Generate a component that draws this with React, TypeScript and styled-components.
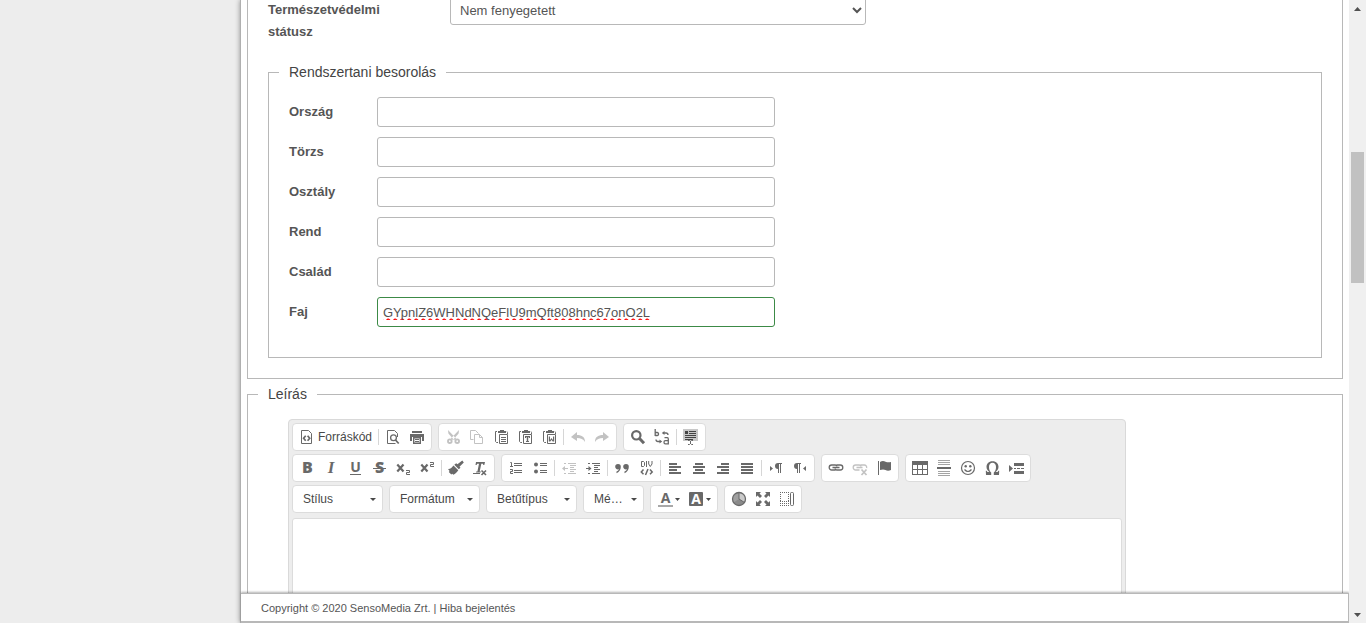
import React from "react";
import styled, { createGlobalStyle, css } from "styled-components";

const INK = "#696969";

const GlobalStyle = createGlobalStyle`
  *, *::before, *::after { box-sizing: border-box; }
  body {
    margin: 0;
    background: #ededed;
    color: #555;
    font-family: "Liberation Sans", Arial, sans-serif;
    font-size: 13px;
  }
  button, input, select, textarea { font-family: inherit; margin: 0; }
`;

const Page = styled.div`
  display: flex;
  height: 100vh;
  overflow: hidden;
`;

const Sidebar = styled.aside`
  flex: 0 0 240px;
`;

const Main = styled.main`
  flex: 1;
  min-width: 0;
  display: flex;
  flex-direction: column;
  background: #fff;
  border-left: 1px solid #b0b0b0;
  box-shadow: 0 0 5px rgba(0, 0, 0, 0.4);
`;

const Scroller = styled.div`
  flex: 1;
  min-height: 0;
  overflow: hidden;
  padding: 0 6px;
`;

const Scrolled = styled.div`
  margin-top: -40px;
`;

const Fieldset = styled.fieldset<{ $end?: number }>`
  margin: 0;
  min-width: 0;
  border: 1px solid #b8b8b8;
  padding: 15px 20px ${(p) => p.$end ?? 20}px;
`;

const Legend = styled.legend`
  margin-left: -10px;
  padding: 0 10px;
  font-size: 14px;
  line-height: 20px;
  color: #444;
`;

const Section = styled.div`
  margin-bottom: 5px;
`;

const StatusRow = styled.div`
  display: grid;
  grid-template-columns: 162px minmax(0, 416px);
  column-gap: 20px;
  align-items: start;
  margin-bottom: 19px;
`;

const Label = styled.label`
  font-weight: bold;
  line-height: 22px;
  padding: 4px 10px 0 0;
`;

const fieldLook = css`
  width: 100%;
  height: 30px;
  border: 1px solid #b8b8b8;
  border-radius: 3px;
  background: #fff;
  color: #555;
`;

const StatusSelect = styled.select`
  ${fieldLook}
  padding: 0 5px;
  font-size: 13px;
`;

const Fields = styled.div`
  display: grid;
  row-gap: 10px;
`;

const FieldRow = styled.div`
  display: grid;
  grid-template-columns: 88px minmax(0, 398px);
  align-items: start;
`;

const TextInput = styled.input<{ $valid?: boolean }>`
  ${fieldLook}
  padding: 0 5px;
  font-size: 13px;
  outline: none;
  ${(p) =>
    p.$valid &&
    css`
      border-color: #3c8a46;
      text-decoration: underline wavy #f00;
      text-decoration-skip-ink: none;
      text-underline-offset: 1px;
    `}
`;

const Editor = styled.div`
  max-width: 838px;
  margin: 0 20px;
  padding: 3px;
  border: 1px solid #d9d9d9;
  border-radius: 4px;
  background: #ededed;
`;

const Toolbar = styled.div`
  display: flex;
  flex-direction: column;
  gap: 3px;
  margin-bottom: 5px;
`;

const ToolRow = styled.div`
  display: flex;
  gap: 6px;
`;

const Group = styled.div`
  display: flex;
  align-items: center;
  height: 28px;
  padding: 0 2px;
  border: 1px solid #dcdcdc;
  border-radius: 4px;
  background: #fff;
`;

const Tool = styled.button<{ $off?: boolean; $gap?: number }>`
  display: flex;
  align-items: center;
  gap: ${(p) => p.$gap ?? 0}px;
  height: 24px;
  padding: 0 4px;
  border: 0;
  background: none;
  color: #484848;
  font-size: 12px;
  opacity: ${(p) => (p.$off ? 0.4 : 1)};
`;

const Separator = styled.span`
  width: 1px;
  height: 16px;
  margin: 0 2px;
  background: #d6d6d6;
`;

const Glyph = styled.svg`
  display: block;
  flex: none;
  overflow: visible;
  fill: ${INK};
`;

const Combo = styled.div<{ $narrow?: boolean }>`
  display: grid;
  align-items: center;
  width: ${(p) => (p.$narrow ? 61 : 91)}px;
  height: 28px;
  border: 1px solid #dcdcdc;
  border-radius: 4px;
  background: #fff;
  > * { grid-area: 1 / 1; }
  > svg { justify-self: end; margin-right: 6px; pointer-events: none; }
`;

const ComboSelect = styled.select`
  appearance: none;
  width: 100%;
  height: 100%;
  padding: 0 14px 0 10px;
  border: 0;
  background: none;
  color: #484848;
  font-size: 12px;
`;

const EditArea = styled.textarea`
  display: block;
  width: 100%;
  height: 300px;
  border: 1px solid #dcdcdc;
  border-radius: 3px;
  background: #fff;
  resize: none;
`;

const Footer = styled.footer`
  position: relative;
  flex: none;
  height: 30px;
  padding: 0 20px;
  border: solid #b8b8b8;
  border-width: 1px 1px 2px 0;
  box-shadow: 0 -1px 2px rgba(0, 0, 0, 0.3);
  background: #fff;
  font-size: 11px;
  line-height: 28px;
`;

const FooterLink = styled.a`
  color: inherit;
  text-decoration: none;
`;

const Track = styled.div`
  position: relative;
  flex: 0 0 17px;
  display: flex;
  flex-direction: column;
  background: #f0f0f0;
`;

const TrackArrow = styled.button`
  display: grid;
  place-items: center;
  height: 17px;
  padding: 0;
  border: 0;
  background: none;
`;

const TrackSpace = styled.div<{ $share: number }>`
  flex: ${(p) => p.$share} 1 0;
`;

const Thumb = styled.div`
  flex: 131 1 0;
  margin: 0 2px;
  background: #c1c1c1;
`;

const line = { fill: "none", stroke: INK, strokeWidth: 1 };
const serif = "Liberation Serif, serif";
const sans = "Open Sans, Liberation Sans, sans-serif";

const alignBars = (short: number) => (
  <path d={`M${short} 3h8v2h-8z M2 6h12v2H2z M${short} 9h8v2h-8z M2 12h12v2H2z`} />
);

const clipboard = (
  <>
    <path d="M5 2h2V1h4v1h2v2H5z" />
    <path {...line} d="M4 2.5H2.5v10l1 1H5M14.500 5V3.500L14 2.500" />
    <path {...line} d="M6.500 5.500h8v9h-8z" />
  </>
);

const curvedArrow = <path d="M1 8l6-5v3c5 0 8 2 8 7-2-3-4-4-8-4v3z" />;

const chain = (
  <g {...line} strokeWidth={1.3}>
    <path d="M7.500 10H3.700a2.400 2.400 0 0 1 0-5h3.500q1.600 0 1.800 1.300" />
    <path d="M8.500 5h3.800a2.400 2.400 0 0 1 0 5H8.800Q7.200 10 7 8.700M4.500 7.500h7" />
  </g>
);

const brokenChain = (
  <>
    <path {...line} strokeWidth={1.3} d="M7.500 10H3.700a2.400 2.400 0 0 1 0-5h3.500q1.600 0 1.800 1.300M8.500 5h3.800a2.400 2.400 0 0 1 2.300 3M4.500 7.500h6" />
    <path {...line} strokeWidth={1.7} d="M9.500 9.500l5 5.500M14.500 9.500l-5 5.500" />
  </>
);

const icons: Record<string, React.ReactNode> = {
  source: (
    <g {...line}>
      <path d="M2.500 1.500h7l3 3v10h-10z" />
      <path d="M6.700 6.700L4.600 9.200l2.100 2.500M8.600 6.700l2.100 2.500-2.100 2.500" strokeWidth={1.7} />
    </g>
  ),
  preview: (
    <g {...line}>
      <path d="M12.500 8V4.500l-3-3h-7v13h8" />
      <circle cx="8.500" cy="8.800" r="2.900" strokeWidth={1.3} />
      <path d="M10.500 11l3.200 3.500" strokeWidth={1.8} />
    </g>
  ),
  print: (
    <>
      <path d="M3 2h10v2H3z M1 5h14v7h-2V8H3v4H1z" />
      <path {...line} strokeWidth={1.4} d="M4.700 8.700h6.600v5.600H4.700z" />
      <path d="M6 10h4v1H6z M6 12h4v1H6z" />
    </>
  ),
  cut: (
    <>
      <path d="M3 1l.4 3.500 5.700 6.500 2-1.500zM14 1l-.4 3.500L7.900 11l-2-1.500z" />
      <g {...line} strokeWidth={1.9}>
        <circle cx="4.800" cy="12.200" r="1.800" />
        <circle cx="12.200" cy="12.200" r="1.800" />
      </g>
    </>
  ),
  copy: (
    <g {...line}>
      <path d="M4.500 10.500h-3v-9h5l3 3" />
      <path d="M5.500 5.500h5l3 3v6h-8zM10.500 5.500v3h3" />
    </g>
  ),
  paste: (
    <>
      {clipboard}
      <path d="M8 8h5v1H8zM8 10h5v1H8zM8 12h5v1H8z" />
    </>
  ),
  pasteText: (
    <>
      {clipboard}
      <path d="M8 7h5v2h-1V8.300h-.8V12h.8v1H9v-1h.8V8.300H9V9H8z" />
    </>
  ),
  pasteWord: (
    <>
      {clipboard}
      <path {...line} strokeWidth={1.200} d="M8.400 7.500v4.500h.6l1.500-2 1.500 2h.6V7.500" />
    </>
  ),
  undo: curvedArrow,
  redo: <g transform="translate(16 0) scale(-1 1)">{curvedArrow}</g>,
  find: (
    <g {...line}>
      <circle cx="6.300" cy="6.300" r="4.200" strokeWidth={2.200} />
      <path d="M9.500 9.500l4.500 4.700" strokeWidth={3} />
    </g>
  ),
  replace: (
    <g {...line} strokeWidth={1.300}>
      <path d="M1.200 0v7M1.200 3.500h2q1.300 0 1.300 1.500T3.200 6.500h-2" />
      <path d="M10.500 8.700h2.800q1 0 1 1.200v5.500M14.300 11.700h-3q-1.300 0-1.300 1.600t1.300 1.600h3" />
      <path d="M14 6q0-2-2-2h-3M2 10.500q0 2 2 2h2" />
      <path d="M10.500 2L7.800 4l2.700 2zM5.500 10.500l2.700 2-2.700 2z" fill={INK} stroke="none" />
    </g>
  ),
  selectAll: (
    <>
      <path fill="#c8c8c8" d="M0 0h15v12H0z" />
      <path fill="#444" d="M2 2h3v3H2zM6 2h7v1H6zM6 4h7v1H6zM2 6h11v1H2zM2 8h11v1H2zM2 10h8v1H2z" />
      <path {...line} d="M5 11.500h1.500l1 1 1-1H10M7.500 12v3M5 15.500h1.500l1-1 1 1H10" />
    </>
  ),
  bold: <text x="8.500" y="13" textAnchor="middle" fontFamily={sans} fontWeight="800" fontSize="16">B</text>,
  italic: <text x="8" y="13" textAnchor="middle" fontFamily={serif} fontWeight="bold" fontStyle="italic" fontSize="17">I</text>,
  underline: (
    <>
      <text x="8.500" y="12" textAnchor="middle" fontFamily={sans} fontWeight="bold" fontSize="14">U</text>
      <path d="M3 14h11v1H3z" />
    </>
  ),
  strike: (
    <>
      <text x="8.500" y="13" textAnchor="middle" fontFamily={sans} fontWeight="800" fontSize="16">S</text>
      <path d="M2 8h13v1H2z" />
    </>
  ),
  sub: (
    <>
      <path {...line} strokeWidth={2.200} d="M2.300 4.500l6.200 7M8.500 4.500l-6.200 7" />
      <path {...line} d="M11 10.500h3.500v2h-3v2H15" />
    </>
  ),
  sup: (
    <>
      <path {...line} strokeWidth={2.200} d="M2.300 4.500l6.200 7M8.500 4.500l-6.200 7" />
      <path {...line} d="M11 2.500h3.500v2h-3v2H15" />
    </>
  ),
  brush: <path d="M14.300.5l1.500 2-4.300 4.300 1 1-1.700 1.500-4.500-4.500L8.200 3.300l1.200 1zM5.500 5.500l4.800 4.800c-1.500 2-3 3.500-5 4.500l-1-1-1 .7L.8 12l.8-1L0 9c2.500.2 4-1.500 5.500-3.500z" />,
  removeFormat: (
    <>
      <path d="M4 2h9l-.7 3h-1l-.3-1.200H9.300L7.700 11.500h1.200l-.2 1H4l.2-1h1.200L7 3.800H5.300L4.500 5h-1z" />
      <path d="M1 13h7v1H1z" />
      <path {...line} strokeWidth={1.600} d="M9.500 10.500l4.500 4.500M14 10.500L9.500 15" />
    </>
  ),
  numbered: (
    <>
      <path {...line} d="M2.300 2.500h1.200v4M2 6.500h3M2 9.500h2.500v2h-2v2H5" />
      <path d="M6 3h8v1H6zM6 5h8v1H6zM6 10h8v1H6zM6 12h8v1H6z" />
    </>
  ),
  bullets: (
    <>
      <circle cx="4" cy="4.500" r="2" />
      <circle cx="4" cy="11.500" r="2" />
      <path d="M8 3h7v1H8zM8 5h7v1H8zM8 10h7v1H8zM8 12h7v1H8z" />
    </>
  ),
  outdent: (
    <>
      <path d="M1 8.500L4 6v2h3v1H4v2z" />
      <path d="M7 3h8v1H7zM9 5h6v1H9zM9 7h4v1H9zM9 9h6v1H9zM9 11h4v1H9zM7 13h8v1H7zM3 3h2v1H3zM3 13h2v1H3z" />
    </>
  ),
  indent: (
    <>
      <path d="M6.500 8.500L3.500 6v2H1v1h2.500v2z" />
      <path d="M7 3h8v1H7zM9 5h6v1H9zM9 7h4v1H9zM9 9h6v1H9zM9 11h4v1H9zM7 13h8v1H7zM3 3h2v1H3zM3 13h2v1H3z" />
    </>
  ),
  quote: (
    <>
      <path d="M4 4a2.800 2.800 0 0 1 2.800 3c0 3-1.800 5-4.300 6.200v-1.600C4 11 4.800 10 4.800 9.300 2.700 9.800 1.200 8.500 1.200 6.800A2.800 2.800 0 0 1 4 4z" />
      <path d="M12 4a2.800 2.800 0 0 1 2.800 3c0 3-1.800 5-4.300 6.200v-1.600c1.500-.6 2.300-1.600 2.300-2.300-2.100.5-3.600-.8-3.600-2.500A2.800 2.800 0 0 1 12 4z" />
    </>
  ),
  div: (
    <g {...line}>
      <path d="M3.500 1.500h2l1 1v3l-1 1h-2zM8.500 1v6M10.700 1v3l1.600 2.500L14 4V1" />
      <path strokeWidth={1.500} d="M5.500 9.500L3.300 12l2.200 2.200M12 9.500l2.200 2.500-2.200 2.200M10 9l-2.500 6" />
    </g>
  ),
  left: alignBars(2),
  center: alignBars(4),
  right: alignBars(6),
  justify: <path d="M2 3h12v2H2zM2 6h12v2H2zM2 9h12v2H2zM2 12h12v2H2z" />,
  ltr: <path d="M2 6l3 2.500L2 11zM10 3h4v1h-1v9h-1V4h-1v9h-1V9a3 3 0 0 1 0-6z" />,
  rtl: <path d="M14 6l-3 2.500 3 2.500zM5 3h4v1H8v9H7V4H6v9H5V9a3 3 0 0 1 0-6z" />,
  link: chain,
  unlink: brokenChain,
  anchor: <path d="M2 1h1v14H2zM4 2c2-1.500 4-1.200 5.500-.3C11.500 2.500 13 2.500 15 2v8c-2 1-4 1-5.500 0C8 9.200 6 9.300 4 10z" />,
  table: <path fillRule="evenodd" d="M0 1h16v14H0zM1 5v4h4V5zM6 5v4h4V5zM11 5v4h4V5zM1 10v4h4v-4zM6 10v4h4v-4zM11 10v4h4v-4z" />,
  hr: (
    <>
      <path fill="#a4a4a4" d="M2 0h12v1H2zM2 2h12v1H2zM2 4h12v1H2zM2 11h12v1H2zM2 13h12v1H2zM2 15h12v1H2z" />
      <path d="M1 7h14v2H1z" />
    </>
  ),
  smiley: (
    <>
      <circle {...line} strokeWidth={1.200} cx="8" cy="8" r="6.500" />
      <circle cx="5.700" cy="6.300" r="1.200" />
      <circle cx="10.300" cy="6.300" r="1.200" />
      <path {...line} strokeWidth={1.200} d="M4.500 9.500q3.500 4 7 0" />
    </>
  ),
  omega: <path d="M8.500 1.200c3.900 0 6 2.500 6 5.600 0 2.400-1.200 4-3 5.200h2l1-1.300h.7L15 15H9.800v-2.500c1.500-1.300 2.200-3 2.200-5.500 0-2.600-1.300-4.300-3.500-4.300S5 4.400 5 7c0 2.500.7 4.200 2.200 5.500V15H2l-.2-4.300h.7L3.500 12h2c-1.800-1.200-3-2.800-3-5.200 0-3.100 2.100-5.600 6-5.600z" />,
  pageBreak: <path d="M1 5l4 3.500L1 12zM6 3h10v3H6zM6 11h10v3H6zM6 8h2v1H6zM9 8h3v1H9zM13 8h3v1h-3z" />,
  textColor: (
    <>
      <text x="8.500" y="12" textAnchor="middle" fontFamily={sans} fontWeight="bold" fontSize="14">A</text>
      <path fill="#a8a8a8" d="M1 14h15v2H1z" />
    </>
  ),
  bgColor: (
    <>
      <rect x="1" y="1" width="14" height="14" rx="1" />
      <text x="8" y="13" textAnchor="middle" fontFamily={sans} fontWeight="bold" fontSize="14" fill="#fff">A</text>
    </>
  ),
  pie: (
    <>
      <circle cx="8" cy="8" r="6.500" fill="#a0a0a0" />
      <path fill="#cacaca" d="M8 8V1.500A6.500 6.500 0 0 1 13.500 11.500z" />
      <path fill="#8a8a8a" d="M8 8l5.500 3.500A6.500 6.500 0 0 1 2.500 11.500z" />
      <path {...line} d="M8 1.500V8l5.500 3.500" />
      <circle {...line} strokeWidth={1.300} cx="8" cy="8" r="6.500" />
    </>
  ),
  maximize: (
    <path d="M1 1h5L4.500 2.500 7 5 5 7 2.500 4.500 1 6zM15 1v5l-1.500-1.500L11 7 9 5l2.500-2.500L10 1zM1 15v-5l1.500 1.500L5 9l2 2-2.500 2.500L6 15zM15 15h-5l1.500-1.500L9 11l2-2 2.500 2.500L15 10z" />
  ),
  blocks: (
    <>
      <path {...line} strokeDasharray="1 1" d="M1 1.500h9M1 10.500h9M1.500 1v10M9.500 1v10" />
      <path {...line} strokeDasharray="1 1" d="M1 12.500h9M1 14.500h9" />
      <rect {...line} x="11.500" y="1.500" width="3" height="13" rx="1" />
    </>
  ),
};

const Icon = ({ name }: { name: string }) => (
  <Glyph width="16" height="16" viewBox="0 0 16 16" aria-hidden="true">
    {icons[name]}
  </Glyph>
);

const Caret = () => (
  <Glyph width="6" height="3" viewBox="0 0 6 3" aria-hidden="true">
    <path fill="#484848" d="M0 0h6L3 3z" />
  </Glyph>
);

const SmallCaret = () => (
  <Glyph width="5" height="3" viewBox="0 0 5 3" aria-hidden="true">
    <path fill="#484848" d="M0 0h5L2.500 3z" />
  </Glyph>
);

type Item = [icon: string, title: string, off?: boolean] | "|";

const Items = ({ items }: { items: Item[] }) => (
  <>
    {items.map((item, i) =>
      item === "|" ? (
        <Separator key={i} />
      ) : (
        <Tool key={i} type="button" aria-label={item[1]} $off={item[2]} disabled={item[2]}>
          <Icon name={item[0]} />
        </Tool>
      )
    )}
  </>
);

const ToolGroup = ({ items }: { items: Item[] }) => (
  <Group>
    <Items items={items} />
  </Group>
);

const combos = [
  { id: "style", text: "Stílus" },
  { id: "format", text: "Formátum" },
  { id: "font", text: "Betűtípus" },
  { id: "size", text: "Mé…", narrow: true },
];

const taxonomy = [
  { id: "orszag", text: "Ország" },
  { id: "torzs", text: "Törzs" },
  { id: "osztaly", text: "Osztály" },
  { id: "rend", text: "Rend" },
  { id: "csalad", text: "Család" },
  { id: "faj", text: "Faj", value: "GYpnlZ6WHNdNQeFlU9mQft808hnc67onO2L" },
];

export default function App() {
  return (
    <>
      <GlobalStyle />
      <Page>
        <Sidebar />
        <Main>
          <Scroller>
            <Scrolled>
              <Section>
                <Fieldset>
                  <Legend>&nbsp;</Legend>
                  <StatusRow>
                    <Label htmlFor="status">Természetvédelmi státusz</Label>
                    <StatusSelect id="status">
                      <option>Nem fenyegetett</option>
                    </StatusSelect>
                  </StatusRow>
                  <Fieldset $end={30}>
                    <Legend>Rendszertani besorolás</Legend>
                    <Fields>
                      {taxonomy.map((f) => (
                        <FieldRow key={f.id}>
                          <Label htmlFor={f.id}>{f.text}</Label>
                          <TextInput id={f.id} type="text" defaultValue={f.value} $valid={!!f.value} />
                        </FieldRow>
                      ))}
                    </Fields>
                  </Fieldset>
                </Fieldset>
              </Section>
              <Fieldset>
                <Legend>Leírás</Legend>
                <Editor>
                  <Toolbar>
                    <ToolRow>
                      <Group>
                        <Tool type="button" $gap={3}>
                          <Icon name="source" />
                          Forráskód
                        </Tool>
                        <Items items={["|", ["preview", "Előnézet"], ["print", "Nyomtatás"]]} />
                      </Group>
                      <ToolGroup
                        items={[
                          ["cut", "Kivágás", true],
                          ["copy", "Másolás", true],
                          ["paste", "Beillesztés"],
                          ["pasteText", "Beillesztés szövegként"],
                          ["pasteWord", "Beillesztés Wordből"],
                          "|",
                          ["undo", "Visszavonás", true],
                          ["redo", "Ismétlés", true],
                        ]}
                      />
                      <ToolGroup items={[["find", "Keresés"], ["replace", "Csere"], "|", ["selectAll", "Mindent kijelöl"]]} />
                    </ToolRow>
                    <ToolRow>
                      <ToolGroup
                        items={[
                          ["bold", "Félkövér"],
                          ["italic", "Dőlt"],
                          ["underline", "Aláhúzott"],
                          ["strike", "Áthúzott"],
                          ["sub", "Alsó index"],
                          ["sup", "Felső index"],
                          "|",
                          ["brush", "Formátum másolása"],
                          ["removeFormat", "Formázás eltávolítása"],
                        ]}
                      />
                      <ToolGroup
                        items={[
                          ["numbered", "Számozás"],
                          ["bullets", "Felsorolás"],
                          "|",
                          ["outdent", "Behúzás csökkentése", true],
                          ["indent", "Behúzás növelése"],
                          "|",
                          ["quote", "Idézet"],
                          ["div", "DIV tároló"],
                          "|",
                          ["left", "Balra"],
                          ["center", "Középre"],
                          ["right", "Jobbra"],
                          ["justify", "Sorkizárt"],
                          "|",
                          ["ltr", "Balról jobbra"],
                          ["rtl", "Jobbról balra"],
                        ]}
                      />
                      <ToolGroup items={[["link", "Hivatkozás"], ["unlink", "Hivatkozás törlése", true], ["anchor", "Horgony"]]} />
                      <ToolGroup
                        items={[
                          ["table", "Táblázat"],
                          ["hr", "Vízszintes vonal"],
                          ["smiley", "Hangulatjel"],
                          ["omega", "Speciális karakter"],
                          ["pageBreak", "Oldaltörés"],
                        ]}
                      />
                    </ToolRow>
                    <ToolRow>
                      {combos.map((c) => (
                        <Combo key={c.id} $narrow={c.narrow}>
                          <ComboSelect id={c.id} aria-label={c.text}>
                            <option>{c.text}</option>
                          </ComboSelect>
                          <Caret />
                        </Combo>
                      ))}
                      <Group>
                        <Tool type="button" aria-label="Betűszín" $gap={2}>
                          <Icon name="textColor" />
                          <SmallCaret />
                        </Tool>
                        <Tool type="button" aria-label="Háttérszín" $gap={2}>
                          <Icon name="bgColor" />
                          <SmallCaret />
                        </Tool>
                      </Group>
                      <ToolGroup items={[["pie", "Diagram"], ["maximize", "Teljes méret"], ["blocks", "Blokkok megjelenítése"]]} />
                    </ToolRow>
                  </Toolbar>
                  <EditArea aria-label="Leírás" />
                </Editor>
              </Fieldset>
            </Scrolled>
          </Scroller>
          <Footer>
            Copyright © 2020 SensoMedia Zrt. | <FooterLink href="#hiba">Hiba bejelentés</FooterLink>
          </Footer>
        </Main>
        <Track>
          <TrackArrow type="button" aria-label="Fel">
            <svg width="7" height="4" viewBox="0 0 7 4">
              <path fill="#505050" d="M0 4L3.500 0 7 4z" />
            </svg>
          </TrackArrow>
          <TrackSpace $share={135} />
          <Thumb />
          <TrackSpace $share={323} />
          <TrackArrow type="button" aria-label="Le">
            <svg width="7" height="4" viewBox="0 0 7 4">
              <path fill="#505050" d="M0 0h7L3.500 4z" />
            </svg>
          </TrackArrow>
        </Track>
      </Page>
    </>
  );
}
